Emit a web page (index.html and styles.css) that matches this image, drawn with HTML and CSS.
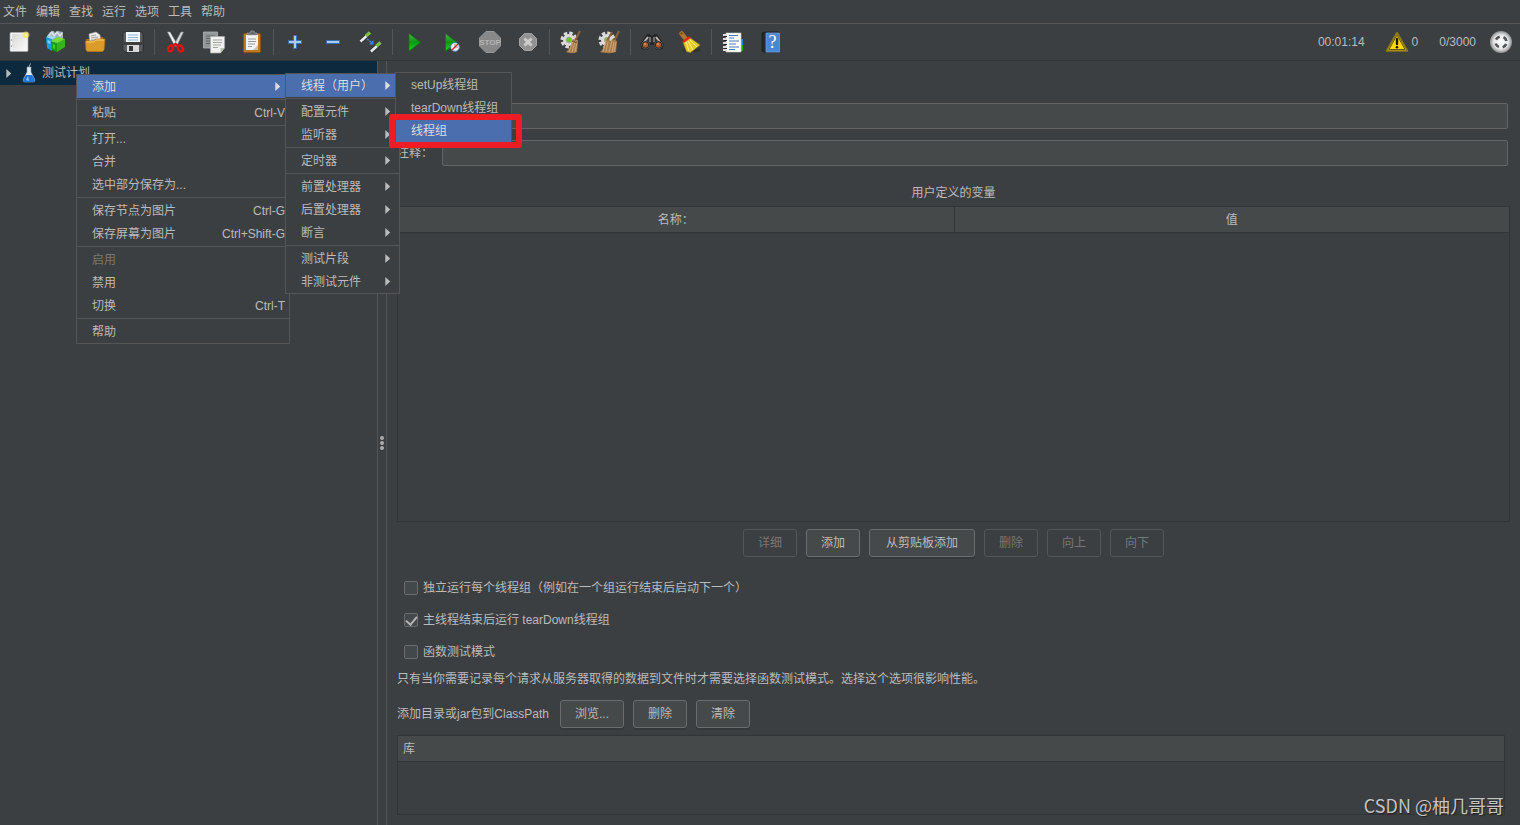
FILE: index.html
```html
<!DOCTYPE html>
<html lang="zh-CN">
<head>
<meta charset="utf-8">
<title>测试计划</title>
<link rel="stylesheet" href="styles.css">
</head>
<body>
<nav class="menubar">
  <button>文件</button><button>编辑</button><button>查找</button><button>运行</button><button>选项</button><button>工具</button><button>帮助</button>
</nav>

<header class="toolbar">
  <button class="tool" aria-label="新建"><svg viewBox="0 0 24 24"><defs><linearGradient id="paper" x1="0" y1="0" x2="1" y2="1"><stop offset="0" stop-color="#d8d8d8"/><stop offset="1" stop-color="#fafafa"/></linearGradient><radialGradient id="glow"><stop offset="0" stop-color="#fffde0"/><stop offset=".4" stop-color="#f5e96a"/><stop offset="1" stop-color="#f0e050" stop-opacity="0"/></radialGradient></defs><rect x="3" y="2.500" width="18" height="19" rx="1" fill="#f4f4f4" stroke="#aaa" stroke-width=".6"/><rect x="5" y="4" width="14.500" height="16" fill="url(#paper)"/><circle cx="4.500" cy="10" r=".7" fill="#888"/><circle cx="4.500" cy="16" r=".7" fill="#888"/><circle cx="19" cy="5" r="4.200" fill="url(#glow)"/></svg></button>
  <button class="tool" aria-label="模板"><svg viewBox="0 0 24 24"><path d="M2 6 5 2l4-1 1 2 3-2 5 1v8l-8 4-8-3z" fill="#9fb1ba"/><path d="M4 6l3-4 2 4 3-4 3 4 2-3" fill="none" stroke="#dce3e6" stroke-width="1.500"/><path d="M1 7l6 2v12l-5-3z" fill="#159ee0"/><path d="M1 7l6 2 4-2-5-1z" fill="#9adcf8"/><path d="M2.500 10l3 1v3l-3-1z" fill="#75d1fa"/><path d="M6 11l6 2v9l-5-2z" fill="#159c1c"/><path d="M12 13l8-4v8l-8 5z" fill="#35b41c"/><path d="M6 11l7-4 7 2-8 4z" fill="#6fdc30"/><path d="M8 14l2 1v4l-2-1z" fill="#45cf35"/></svg></button>
  <button class="tool" aria-label="打开"><svg viewBox="0 0 24 24"><path d="M3 9h7l2-2h8v12H3z" fill="#a46f0e"/><path d="M6 4l7-2 4 3 1 9H7z" fill="#eee" stroke="#aaa" stroke-width=".6"/><path d="M8 6l5-1M8 8l7-1M8 10h8" stroke="#888" stroke-width=".8"/><path d="M2.500 11h8l2-2h9.500l-1 11-1.500 1.500H4.500L3 20z" fill="#d99c2a" stroke="#b77a12" stroke-width=".7"/><path d="M3.500 12h7.500l2-2h8" fill="none" stroke="#f6ce76"/></svg></button>
  <button class="tool" aria-label="保存"><svg viewBox="0 0 24 24"><path d="M3 2h18l1 2v17l-1 1H4l-2-2V3z" fill="#5a5d60" stroke="#282a2b" stroke-width=".8"/><path d="M5 2h14v10H5z" fill="#f1f6fb"/><path d="M7 5h10M7 7.500h10M7 10h10" stroke="#91b5d5" stroke-width="1"/><rect x="2.500" y="12" width="19" height="3" fill="#3c3e40"/><rect x="6" y="15" width="12" height="7" fill="#d9d9d9"/><rect x="8" y="16" width="4" height="5" fill="#323538"/></svg></button>
  <span class="rule"></span>
  <button class="tool" aria-label="剪切"><svg viewBox="0 0 24 24"><path d="M3.500 2h2.500l7 12-2 2.500z" fill="#f1f1f1" stroke="#999" stroke-width=".6"/><path d="M19.500 2H17l-6.500 12 2 2.500z" fill="#dcdcdc" stroke="#888" stroke-width=".6"/><ellipse cx="6.500" cy="18.500" rx="2.300" ry="3" transform="rotate(35 6.500 18.500)" fill="none" stroke="#df1515" stroke-width="2.400"/><ellipse cx="16.500" cy="18.500" rx="2.300" ry="3" transform="rotate(-35 16.500 18.500)" fill="none" stroke="#df1515" stroke-width="2.400"/><path d="M8 16.500l3.500-2.500 3.500 2.500" fill="none" stroke="#d71515" stroke-width="2.400"/></svg></button>
  <button class="tool" aria-label="复制"><svg viewBox="0 0 24 24"><path d="M1.500 2h14v16h-14z" fill="#93979a" stroke="#b1b4b6" stroke-width=".8"/><path d="M4 6h9M4 8.500h8M4 11h5M4 13.500h4" stroke="#5f6264"/><path d="M8.500 6.500h14V18l-4 5h-10z" fill="#f1f2ef" stroke="#aaa" stroke-width=".7"/><path d="M11 10h9M11 12.500h9M11 15h8M11 17.500h5" stroke="#a1a39e"/><path d="M22.500 18h-4v5z" fill="#b3c4aa"/></svg></button>
  <button class="tool" aria-label="粘贴"><svg viewBox="0 0 24 24"><rect x="3.500" y="3.500" width="17" height="19" rx="1" fill="#bd7a20" stroke="#875311"/><path d="M6 5h12v15H6z" fill="#f3f3f3"/><path d="M8 9h8M8 11.500h8M8 14h7M8 16.500h4" stroke="#999"/><path d="M18 15l-5 5h5z" fill="#c1c4bc"/><path d="M7 5V3h3l1-2h3l1 2h2v2z" fill="#666b70" stroke="#aaa" stroke-width=".6"/></svg></button>
  <span class="rule"></span>
  <button class="tool" aria-label="展开"><svg viewBox="0 0 24 24"><path d="M10.500 5.500h3v5h5v3h-5v5h-3v-5h-5v-3h5z" fill="#a8cdf3" stroke="#376fb3"/></svg></button>
  <button class="tool" aria-label="折叠"><svg viewBox="0 0 24 24"><path d="M5.500 10.500h13v3h-13z" fill="#a8cdf3" stroke="#376fb3"/></svg></button>
  <button class="tool" aria-label="切换"><svg viewBox="0 0 24 24"><path d="M2 11l8-7M13 21l7-7" stroke="#2a2c2d" stroke-width="4"/><path d="M1.500 11.500l6-5.500M12 21.500l6-5.500" stroke="#ececec" stroke-width="2.500"/><path d="M7 6l4-3.500M17.500 16l4-3.500" stroke="#7dbb50" stroke-width="3.500"/><path d="M8 9l5 4" stroke="#3686ec" stroke-width="1.500" stroke-dasharray="2 1"/><path d="M14.500 10v4.500h-4.500z" fill="#3686ec"/></svg></button>
  <span class="rule"></span>
  <button class="tool" aria-label="启动"><svg viewBox="0 0 24 24"><defs><linearGradient id="play" x1="0" y1="0" x2="0" y2="1"><stop offset="0" stop-color="#4bb34b"/><stop offset=".5" stop-color="#129512"/><stop offset="1" stop-color="#16db16"/></linearGradient></defs><path d="M7 3.500l11.500 9L7 21z" fill="url(#play)" stroke="#0b790b" stroke-width=".8"/></svg></button>
  <button class="tool" aria-label="不停顿开始"><svg viewBox="0 0 24 24"><path d="M5.500 3.500l11.500 9L5.500 21z" fill="url(#play)" stroke="#0b790b" stroke-width=".8"/><circle cx="15" cy="17" r="4.300" fill="#f3f7fb" stroke="#568bbd"/><path d="M15 17v-3M15 17h3" stroke="#667" stroke-width=".7"/><path d="M12 20l6-6" stroke="#e02323" stroke-width="1.500"/></svg></button>
  <button class="tool" aria-label="停止" disabled><svg viewBox="0 0 24 24"><path d="M8 1.500h8L22.500 8v8L16 22.500H8L1.500 16V8z" fill="#888" stroke="#999"/><text class="stop-word" x="12" y="15" text-anchor="middle">STOP</text></svg></button>
  <button class="tool" aria-label="关闭" disabled><svg viewBox="0 0 24 24"><path d="M8.500 3.500h7l5 5v7l-5 5h-7l-5-5v-7z" fill="#929292" stroke="#a4a4a4"/><path d="M8.500 8.500l7 7m0-7l-7 7" stroke="#ccc" stroke-width="3"/></svg></button>
  <span class="rule"></span>
  <button class="tool" aria-label="清除"><svg viewBox="0 0 24 24"><circle cx="10" cy="10" r="6" fill="#ddd"/><circle cx="10" cy="10" r="7" fill="none" stroke="#dadada" stroke-width="3" stroke-dasharray="3.500 2"/><circle cx="10" cy="10" r="3" fill="#65c91c" stroke="#aaa"/><path d="M21 1l-5 10" stroke="#8b6335" stroke-width="2"/><path d="M14 9l5 2-1 11c-4 2-8 1-11 0 4-3 5-8 7-13z" fill="#a87d4d"/><path d="M14 11l-4 11M16 12l-3 10M18 12l-2 10" stroke="#d6b182" stroke-width=".8"/><path d="M13 11l5 2" stroke="#725132"/></svg></button>
  <button class="tool" aria-label="清除全部"><svg viewBox="0 0 24 24"><circle cx="10" cy="10" r="6" fill="#ddd"/><circle cx="10" cy="10" r="7" fill="none" stroke="#dadada" stroke-width="3" stroke-dasharray="3.500 2"/><circle cx="10" cy="10" r="3" fill="#8db66c"/><path d="M15 2l-5 9M22 1l-5 10" stroke="#8b6335" stroke-width="2"/><path d="M9 9l5 2 1-2 5 2-1 11c-6 2-11 1-16 0 4-3 5-8 6-13z" fill="#a87d4d"/><path d="M9 11L6 22M11 12l-2 10M15 11l-3 11M17 12l-2 10M19 12l-2 10" stroke="#d6b182" stroke-width=".8"/></svg></button>
  <span class="rule"></span>
  <button class="tool" aria-label="查找"><svg viewBox="0 0 24 24"><path d="M7 5h3l1 2h2l1-2h3l6 9-1 5h-6l-2-5h-4l-2 5H2l-1-5z" fill="#303030" stroke="#161616"/><path d="M8 7l-4 5M16 7l4 5" stroke="#bdbdbd" stroke-width="2"/><path d="M10 7v5M14 7v5" stroke="#aaa"/><circle cx="5.500" cy="15" r="4" fill="#1b1b1b" stroke="#777" stroke-width=".6"/><circle cx="18.500" cy="15" r="4" fill="#1b1b1b" stroke="#777" stroke-width=".6"/><circle cx="5.500" cy="15" r="2.700" fill="#a95a2a"/><circle cx="18.500" cy="15" r="2.700" fill="#a95a2a"/><circle cx="5" cy="14" r="1" fill="#e49d68"/><circle cx="18" cy="14" r="1" fill="#e49d68"/></svg></button>
  <button class="tool" aria-label="重置查找"><svg viewBox="0 0 24 24"><ellipse cx="14" cy="20" rx="9" ry="2" fill="#303233"/><path d="M3.500 3.500l4 5" stroke="#b27430" stroke-width="4.500" stroke-linecap="round"/><circle cx="3.500" cy="3.500" r="1" fill="#654018"/><path d="M5 12l6.500-4.500L22 15l-9.500 7.500-4-1z" fill="#e6cb2a" stroke="#ac8c0d" stroke-width=".6"/><path d="M8 12l3 9M10 11l5 9M12 10l7 7" stroke="#fff285"/><path d="M5 12l7-5" stroke="#d92a1b" stroke-width="2.500"/></svg></button>
  <span class="rule"></span>
  <button class="tool" aria-label="函数助手"><svg viewBox="0 0 24 24"><path d="M19 9h3v6h-3z" fill="#2784df"/><path d="M19 15h3v6h-3z" fill="#25a91e"/><path d="M5 3h15v19H5z" fill="#fff" stroke="#ccc" stroke-width=".6"/><path d="M8 5.500h9M8 8h5M8 11h10M8 14h7M8 17h10M8 19.500h6" stroke="#4179bd"/><path d="M2 5h4M2 9h4M2 13h4M2 17h4M2 20h4" stroke="#ddd" stroke-width="1.800"/><path d="M3 6.500h3M3 10.500h3M3 14.500h3M3 18.500h3" stroke="#222"/></svg></button>
  <button class="tool" aria-label="帮助"><svg viewBox="0 0 24 24"><path d="M3 3l3-1h14v19l-2 1H4l-1-1z" fill="#25282d" stroke="#16191d" stroke-width=".7"/><path d="M7 3h13.500v19H7z" fill="#4788d6" stroke="#76abea" stroke-width=".7"/><text class="help-mark" x="13.500" y="18" text-anchor="middle">?</text></svg></button>
  <div class="status">
    <span class="clock">00:01:14</span>
    <button class="warnings" aria-label="日志错误 0"><svg viewBox="0 0 24 24"><path d="M12 2.500l10.500 18.500h-21z" fill="#f4cb0a" stroke="#8c7817" stroke-width="1.600" stroke-linejoin="round"/><path d="M12 5l8 14.500H4z" fill="#ffd900" stroke="#433b13" stroke-width=".8"/><path d="M12 9v5" stroke="#151515" stroke-width="2.400" stroke-linecap="round"/><circle cx="12" cy="17.200" r="1.300" fill="#151515"/></svg><span>0</span></button>
    <span>0/3000</span>
    <svg class="remote" viewBox="0 0 24 24"><defs><radialGradient id="disc"><stop offset="0" stop-color="#fff"/><stop offset=".65" stop-color="#e6e6e6"/><stop offset="1" stop-color="#8d8d8d"/></radialGradient></defs><circle cx="12" cy="12" r="11" fill="url(#disc)"/><circle cx="12" cy="12" r="5.500" fill="none" stroke="#4f5355" stroke-width="2.600" stroke-dasharray="4.640 4" stroke-dashoffset="-2"/></svg>
  </div>
</header>

<div class="workspace">
  <aside class="tree">
    <div class="tree-row"><svg class="arrow" viewBox="0 0 6 10"><path d="M0 0l5.500 5-5.500 5z"/></svg><svg class="flask" viewBox="0 0 14 20"><path d="M7 4l1.500-3.500" stroke="#9aabb8" stroke-width="1"/><path d="M5 4h4v5l4 8-1 2H2l-1-2 4-8z" fill="#e3edf6" stroke="#889eaf" stroke-width=".6"/><path d="M4 12h6l3 5-1 2H2l-1-2z" fill="#2476d6"/><path d="M4 17l2-4 1 5z" fill="#91c8ff"/></svg><span>测试计划</span></div>
  </aside>
  <div class="splitter"><i></i><i></i><i></i></div>
  <main class="editor">
    <form class="fields">
      <input id="name" type="text" aria-label="名称">
      <label for="note">注释：</label><input id="note" type="text">
    </form>
    <div class="caption" id="vars-caption">用户定义的变量</div>
    <div class="grid grid-vars">
      <table aria-labelledby="vars-caption"><thead><tr><th>名称：</th><th>值</th></tr></thead></table>
    </div>
    <div class="actions">
      <button class="btn" disabled>详细</button><button class="btn">添加</button><button class="btn wide">从剪贴板添加</button><button class="btn" disabled>删除</button><button class="btn" disabled>向上</button><button class="btn" disabled>向下</button>
    </div>
    <div class="options">
      <label><input type="checkbox">独立运行每个线程组（例如在一个组运行结束后启动下一个）</label>
      <label><input type="checkbox" checked>主线程结束后运行 tearDown线程组</label>
      <label><input type="checkbox">函数测试模式</label>
    </div>
    <p class="hint">只有当你需要记录每个请求从服务器取得的数据到文件时才需要选择函数测试模式。选择这个选项很影响性能。</p>
    <div class="classpath">
      <span>添加目录或jar包到ClassPath</span><button class="btn">浏览...</button><button class="btn">删除</button><button class="btn">清除</button>
    </div>
    <div class="grid grid-lib">
      <table><thead><tr><th>库</th></tr></thead></table>
    </div>
  </main>
</div>

<div class="menu menu-main">
  <button class="active">添加<svg class="arrow" viewBox="0 0 6 10"><path d="M0 0l5.500 5-5.500 5z"/></svg></button><hr>
  <button>粘贴<kbd>Ctrl-V</kbd></button><hr>
  <button>打开...</button>
  <button>合并</button>
  <button>选中部分保存为...</button><hr>
  <button>保存节点为图片<kbd>Ctrl-G</kbd></button>
  <button>保存屏幕为图片<kbd>Ctrl+Shift-G</kbd></button><hr>
  <button disabled>启用</button>
  <button>禁用</button>
  <button>切换<kbd>Ctrl-T</kbd></button><hr>
  <button>帮助</button>
</div>
<div class="menu menu-add">
  <button class="active">线程（用户）<svg class="arrow" viewBox="0 0 6 10"><path d="M0 0l5.500 5-5.500 5z"/></svg></button><hr>
  <button>配置元件<svg class="arrow" viewBox="0 0 6 10"><path d="M0 0l5.500 5-5.500 5z"/></svg></button>
  <button>监听器<svg class="arrow" viewBox="0 0 6 10"><path d="M0 0l5.500 5-5.500 5z"/></svg></button><hr>
  <button>定时器<svg class="arrow" viewBox="0 0 6 10"><path d="M0 0l5.500 5-5.500 5z"/></svg></button><hr>
  <button>前置处理器<svg class="arrow" viewBox="0 0 6 10"><path d="M0 0l5.500 5-5.500 5z"/></svg></button>
  <button>后置处理器<svg class="arrow" viewBox="0 0 6 10"><path d="M0 0l5.500 5-5.500 5z"/></svg></button>
  <button>断言<svg class="arrow" viewBox="0 0 6 10"><path d="M0 0l5.500 5-5.500 5z"/></svg></button><hr>
  <button>测试片段<svg class="arrow" viewBox="0 0 6 10"><path d="M0 0l5.500 5-5.500 5z"/></svg></button>
  <button>非测试元件<svg class="arrow" viewBox="0 0 6 10"><path d="M0 0l5.500 5-5.500 5z"/></svg></button>
</div>
<div class="menu menu-threads">
  <button>setUp线程组</button>
  <button>tearDown线程组</button>
  <button class="active">线程组</button>
</div>
<div class="marker"></div>
<div class="watermark">CSDN @柚几哥哥</div>
</body>
</html>
```

FILE: styles.css
```css
* { box-sizing: border-box; }

body {
  margin: 0;
  height: 100vh;
  display: flex;
  flex-direction: column;
  overflow: hidden;
  background: #3c3f41;
  color: #bbbbbb;
  font: 12px/18px "Liberation Sans", "Noto Sans CJK SC", sans-serif;
}

button, input {
  font: inherit;
  color: inherit;
  margin: 0;
}

button {
  padding: 0;
  border: 0;
  background: none;
}

.menubar {
  display: flex;
  gap: 9px;
  height: 24px;
  padding: 0 3px;
  border-bottom: 1px solid #555555;
}

.toolbar {
  display: flex;
  align-items: center;
  height: 37px;
  border-bottom: 1px solid #323537;
}

.tool {
  width: 38px;
  height: 36px;
  display: flex;
  align-items: center;
  justify-content: center;
}

.tool svg, .warnings svg, .remote {
  width: 24px;
  height: 24px;
}

.rule {
  width: 1px;
  height: 26px;
  margin: 0 2px;
  background: #555555;
}

.stop-word {
  font: bold 8px "Liberation Sans", sans-serif;
  fill: #b4b4b4;
}

.help-mark {
  font: 18px "Liberation Serif", serif;
  fill: #ffffff;
}

.status {
  display: flex;
  align-items: center;
  margin-left: auto;
  padding-right: 7px;
}

.clock { margin-right: 20px; }

.warnings {
  display: flex;
  align-items: center;
  gap: 3px;
  margin-right: 21px;
}

.remote { margin-left: 13px; }

.workspace {
  display: flex;
  flex: 1;
  min-height: 0;
}

.tree {
  width: 378px;
  border-right: 1px solid #555555;
}

.tree-row {
  display: flex;
  align-items: center;
  height: 24px;
  padding-left: 6px;
  background: #0d293e;
}

.arrow {
  width: 6px;
  height: 9px;
  fill: #bbbbbb;
}

.flask {
  width: 14px;
  height: 20px;
  margin: 0 6px 0 10px;
}

.splitter {
  display: flex;
  flex-direction: column;
  align-items: center;
  justify-content: center;
  gap: 1px;
  width: 9px;
  border-right: 1px solid #555555;
}

.splitter i {
  width: 4px;
  height: 4px;
  border-radius: 2px;
  background: #adadad;
}

.editor {
  flex: 1;
  min-width: 0;
  display: flex;
  flex-direction: column;
  padding: 42px 10px 10px;
}

.fields {
  display: grid;
  grid-template-columns: 45px 1fr;
  row-gap: 11px;
  align-items: center;
  margin-right: 2px;
}

.fields input {
  grid-column: 2;
  height: 26px;
  min-width: 0;
  border: 1px solid #646464;
  border-radius: 2px;
  background: #45494a;
}

.caption {
  margin: 18px 0 4px;
  text-align: center;
}

.grid { border: 1px solid #323537; }

.grid-vars { flex: 1; }

.grid-lib {
  height: 80px;
  margin: 7px 5px 0 0;
}

.grid table {
  width: 100%;
  border-spacing: 0;
  table-layout: fixed;
}

.grid th {
  height: 26px;
  padding: 0 5px;
  background: #45494a;
  border-bottom: 1px solid #323537;
  font-weight: normal;
}

.grid th + th { border-left: 1px solid #323537; }

.grid-lib th { text-align: left; }

.btn {
  height: 28px;
  padding: 0 14px;
  border: 1px solid #6a6d6e;
  border-radius: 3px;
  background: #45494a;
  box-shadow: 0 2px 0 #35383a;
}

.btn.wide { padding: 0 16px; }

.btn:disabled {
  color: #777777;
  border-color: #555555;
  background: none;
  box-shadow: none;
}

.actions {
  display: flex;
  justify-content: center;
  gap: 9px;
  margin: 7px 0 15px;
}

.options label {
  display: flex;
  align-items: center;
  gap: 5px;
  height: 32px;
  padding-left: 7px;
}

.options input {
  appearance: none;
  width: 14px;
  height: 14px;
  border: 1px solid #6b6b6b;
  border-radius: 2px;
  background: #43494a;
}

.options input:checked {
  display: flex;
  justify-content: center;
}

.options input:checked::before {
  content: "";
  width: 5px;
  height: 9px;
  border: solid #b4b4b4;
  border-width: 0 2px 2px 0;
  transform: rotate(40deg);
}

.hint {
  margin: 0;
  line-height: 22px;
}

.classpath {
  display: flex;
  align-items: center;
  gap: 9px;
  margin-top: 10px;
}

.classpath span { min-width: 154px; }

.menu {
  position: absolute;
  border: 1px solid #555555;
  background: #3c3f41;
}

.menu button {
  display: flex;
  align-items: center;
  justify-content: space-between;
  width: 100%;
  height: 23px;
  padding: 0 4px 0 15px;
  white-space: nowrap;
}

.menu .active { background: #4b6eaf; color: #dddddd; }

.menu .active .arrow { fill: #dddddd; }

.menu button:disabled { color: #777777; }

.menu hr {
  height: 1px;
  margin: 1px 0;
  border: 0;
  background: #555555;
}

.menu kbd { font: inherit; }

.menu .arrow { margin-right: 4px; }

.menu-main {
  left: 76px;
  top: 74px;
  width: 214px;
}

.menu-add {
  left: 285px;
  top: 73px;
  width: 115px;
}

.menu-threads {
  left: 395px;
  top: 72px;
  width: 117px;
}

.marker {
  position: absolute;
  left: 389px;
  top: 114px;
  width: 133px;
  height: 34px;
  border: 6px solid #ee1c25;
  border-radius: 3px;
}

.watermark {
  position: absolute;
  right: 16px;
  bottom: 7px;
  font: 18px/26px "Noto Sans CJK SC", sans-serif;
  color: #c4c4c4;
  text-shadow: 1px 1px 1px #222222;
}
```
